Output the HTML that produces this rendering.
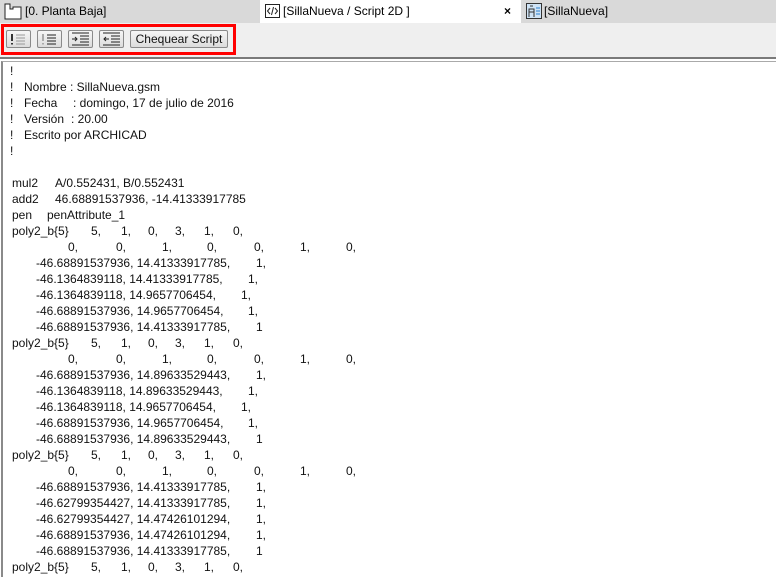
<!DOCTYPE html>
<html><head><meta charset="utf-8"><style>
*{margin:0;padding:0;box-sizing:border-box}
body{width:776px;height:577px;overflow:hidden;background:#fff;font-family:"Liberation Sans",Arial,sans-serif;position:relative}
.tabbar{position:absolute;left:0;top:0;width:776px;height:23px;background:#d9d9d9}
.tab{position:absolute;top:0;height:23px;font-size:12px;line-height:23px;color:#000}
.toolbar{position:absolute;left:0;top:23px;width:776px;height:36px;background:#efefef;border-bottom:2px solid #7a7a7a}
.red{position:absolute;left:1px;top:24px;width:235px;height:31px;border:3px solid #f00}
.btn{position:absolute;top:30px;height:18px;border:1px solid #8a8a8a;border-radius:2px;background:linear-gradient(#f6f6f6,#dcdcdc)}
.ed{position:absolute;left:1px;top:61px;width:775px;height:516px;border-left:2px solid #8a8a8a;border-top:1px solid #aaa}
.l{position:absolute;height:16px;font-size:12px;line-height:16px;color:#111;white-space:pre}
</style></head><body>
<div class="tabbar">
 <div class="tab" style="left:0;width:259px">
  <svg style="position:absolute;left:4px;top:3px" width="18" height="17" viewBox="0 0 18 17"><path d="M1 16V1h5v5h3V4h8v12z" fill="#fff" stroke="#222"/></svg>
  <span style="position:absolute;left:25px">[0. Planta Baja]</span></div>
 <div class="tab" style="left:260px;width:261px;background:#fff">
  <svg style="position:absolute;left:5px;top:4px" width="15" height="14" viewBox="0 0 15 14"><rect x="0.5" y="0.5" width="14" height="13" fill="#fff" stroke="#222"/><path d="M5 4L2.5 7 5 10M10 4l2.5 3L10 10M8.5 3L6.5 11" fill="none" stroke="#222"/></svg>
  <span style="position:absolute;left:23px">[SillaNueva / Script 2D ]</span>
  <span style="position:absolute;left:244px;font-weight:bold">×</span></div>
 <div class="tab" style="left:521px;width:255px">
  <svg style="position:absolute;left:5px;top:3px" width="16" height="16" viewBox="0 0 16 16"><rect x="0.5" y="0.5" width="15" height="15" fill="#cfe3f5" stroke="#333"/><path d="M3 14V6h5v8M3 9h5M4 3h3" stroke="#333" fill="none"/><path d="M10 5h4M10 8h4M10 11h4" stroke="#2a7fd0"/></svg>
  <span style="position:absolute;left:23px">[SillaNueva]</span></div>
</div>
<div class="toolbar"></div>
<div class="red"></div>
<div class="btn" style="left:6px;width:25px"><svg width="23" height="16" viewBox="0 0 23 16"><path d="M5 3v7M5 12v1.5" stroke="#333" stroke-width="2"/><path d="M9 4h9M9 7h9M9 10h9M9 13h9" stroke="#999"/></svg></div>
<div class="btn" style="left:37px;width:25px"><svg width="23" height="16" viewBox="0 0 23 16"><path d="M5 3v7M5 12v1.5" stroke="#aaa" stroke-width="2"/><path d="M9 4h9M9 7h9M9 10h9M9 13h9" stroke="#222"/></svg></div>
<div class="btn" style="left:68px;width:25px"><svg width="23" height="16" viewBox="0 0 23 16"><path d="M3 2h17M11 5h9M11 8h9M11 11h9M3 14h17" stroke="#222"/><path d="M3 8h5M6 6l2 2-2 2" stroke="#222" fill="none"/></svg></div>
<div class="btn" style="left:99px;width:25px"><svg width="23" height="16" viewBox="0 0 23 16"><path d="M3 2h17M11 5h9M11 8h9M11 11h9M3 14h17" stroke="#222"/><path d="M4 8h5M6 6L4 8l2 2" stroke="#222" fill="none"/></svg></div>
<div class="btn" style="left:130px;width:98px;font-size:12px;line-height:16px;text-align:center;color:#111">Chequear Script</div>
<div class="ed"></div>
<div id="t"></div>
<script>
var L=[
[[10,"!"]],
[[10,"!"],[24,"Nombre"],[70,": SillaNueva.gsm"]],
[[10,"!"],[24,"Fecha"],[73,": domingo, 17 de julio de 2016"]],
[[10,"!"],[24,"Versión"],[71,": 20.00"]],
[[10,"!"],[24,"Escrito por ARCHICAD"]],
[[10,"!"]],
[],
[[12,"mul2"],[55,"A/0.552431, B/0.552431"]],
[[12,"add2"],[55,"46.68891537936, -14.41333917785"]],
[[12,"pen"],[47,"penAttribute_1"]]];
var P=[[12,"poly2_b{5}"],[91,"5,"],[121,"1,"],[148,"0,"],[175,"3,"],[204,"1,"],[233,"0,"]];
var Z=[[68,"0,"],[116,"0,"],[162,"1,"],[207,"0,"],[254,"0,"],[300,"1,"],[346,"0,"]];
var G=[
[["-46.68891537936, 14.41333917785,",256],["-46.1364839118, 14.41333917785,",248],["-46.1364839118, 14.9657706454,",241],["-46.68891537936, 14.9657706454,",248],["-46.68891537936, 14.41333917785,",256]],
[["-46.68891537936, 14.89633529443,",256],["-46.1364839118, 14.89633529443,",248],["-46.1364839118, 14.9657706454,",241],["-46.68891537936, 14.9657706454,",248],["-46.68891537936, 14.89633529443,",256]],
[["-46.68891537936, 14.41333917785,",256],["-46.62799354427, 14.41333917785,",256],["-46.62799354427, 14.47426101294,",256],["-46.68891537936, 14.47426101294,",256],["-46.68891537936, 14.41333917785,",256]]];
G.forEach(function(g){L.push(P);L.push(Z);g.forEach(function(r,i){L.push([[36,r[0]],[r[1],i==4?"1":"1,"]]);});});
L.push(P);
var h="";L.forEach(function(line,i){line.forEach(function(s){h+='<div class="l" style="left:'+s[0]+'px;top:'+(63+i*16)+'px">'+s[1]+'</div>';});});
document.getElementById("t").innerHTML=h;
</script>
</body></html>
